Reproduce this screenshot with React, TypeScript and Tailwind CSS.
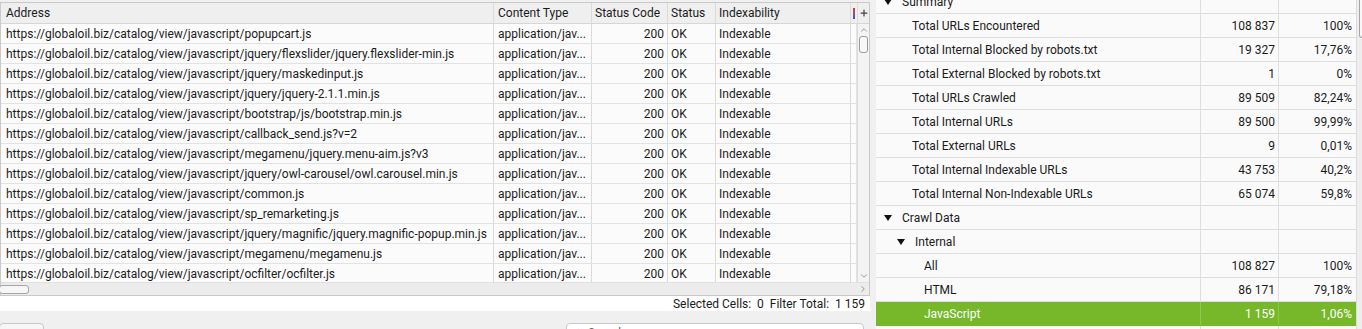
import { ChevronUp, ChevronDown, ChevronRight, Plus, Search } from 'lucide-react'

const FONT = { fontFamily: 'Roboto, "Liberation Sans", sans-serif' }

const URLS = [
  'https://globaloil.biz/catalog/view/javascript/popupcart.js',
  'https://globaloil.biz/catalog/view/javascript/jquery/flexslider/jquery.flexslider-min.js',
  'https://globaloil.biz/catalog/view/javascript/jquery/maskedinput.js',
  'https://globaloil.biz/catalog/view/javascript/jquery/jquery-2.1.1.min.js',
  'https://globaloil.biz/catalog/view/javascript/bootstrap/js/bootstrap.min.js',
  'https://globaloil.biz/catalog/view/javascript/callback_send.js?v=2',
  'https://globaloil.biz/catalog/view/javascript/megamenu/jquery.menu-aim.js?v3',
  'https://globaloil.biz/catalog/view/javascript/jquery/owl-carousel/owl.carousel.min.js',
  'https://globaloil.biz/catalog/view/javascript/common.js',
  'https://globaloil.biz/catalog/view/javascript/sp_remarketing.js',
  'https://globaloil.biz/catalog/view/javascript/jquery/magnific/jquery.magnific-popup.min.js',
  'https://globaloil.biz/catalog/view/javascript/megamenu/megamenu.js',
  'https://globaloil.biz/catalog/view/javascript/ocfilter/ocfilter.js',
]

type Row = { label: string; level: number; count?: string; pct?: string; toggle?: boolean; active?: boolean }

const SUMMARY: Row[] = [
  { label: 'Summary', level: 0, toggle: true },
  { label: 'Total URLs Encountered', level: 1, count: '108 837', pct: '100%' },
  { label: 'Total Internal Blocked by robots.txt', level: 1, count: '19 327', pct: '17,76%' },
  { label: 'Total External Blocked by robots.txt', level: 1, count: '1', pct: '0%' },
  { label: 'Total URLs Crawled', level: 1, count: '89 509', pct: '82,24%' },
  { label: 'Total Internal URLs', level: 1, count: '89 500', pct: '99,99%' },
  { label: 'Total External URLs', level: 1, count: '9', pct: '0,01%' },
  { label: 'Total Internal Indexable URLs', level: 1, count: '43 753', pct: '40,2%' },
  { label: 'Total Internal Non-Indexable URLs', level: 1, count: '65 074', pct: '59,8%' },
  { label: 'Crawl Data', level: 0, toggle: true },
  { label: 'Internal', level: 1, toggle: true },
  { label: 'All', level: 2, count: '108 827', pct: '100%' },
  { label: 'HTML', level: 2, count: '86 171', pct: '79,18%' },
  { label: 'JavaScript', level: 2, count: '1 159', pct: '1,06%', active: true },
  { label: '', level: 2 },
]

const cell = 'h-full flex items-center border-r border-[#dadada] px-[4px] whitespace-nowrap overflow-hidden'

function Triangle() {
  return <span className="inline-block w-0 h-0 border-l-[4px] border-r-[4px] border-t-[6px] border-l-transparent border-r-transparent border-t-[#111] mr-[10px]" />
}

export default function App() {
  return (
    <div style={FONT} className="w-[1362px] h-[329px] flex bg-[#f0f0f0] overflow-hidden text-[#1b1b1b]">
      {/* left: urls table */}
      <div className="w-[870px] shrink-0 flex flex-col pt-[2px]">
        <div className="border border-[#c9c9c9] bg-white flex flex-col">
          <div className="flex">
            <div className="w-[856px] flex flex-col">
              <div className="h-[21px] flex bg-[#efefef] border-b border-[#d6d6d6] text-[12px]">
                <div className={`${cell} w-[493px] pl-[5px]`}>Address</div>
                <div className={`${cell} w-[98px]`}>Content Type</div>
                <div className={`${cell} w-[76px] pl-[3px]`}>Status Code</div>
                <div className={`${cell} w-[48px] pl-[3px]`}>Status</div>
                <div className={`${cell} w-[135px] pl-[3px]`}>Indexability</div>
                <div className="h-full flex items-center pl-[2px]">
                  <span className="w-[2px] h-[11px] bg-gradient-to-b from-[#d03030] to-[#3050d0]" />
                </div>
              </div>
              <div className="h-[258px] overflow-hidden text-[12px]">
                {URLS.map((u) => (
                  <div key={u} className="h-[20px] flex bg-[#fbfbfb] border-b border-[#e2e2e2]">
                    <div className={`${cell} w-[493px] pl-[5px]`}>{u}</div>
                    <div className={`${cell} w-[98px]`}>application/jav...</div>
                    <div className={`${cell} w-[76px] justify-end pr-[3px]`}>200</div>
                    <div className={`${cell} w-[48px] pl-[3px]`}>OK</div>
                    <div className={`${cell} w-[135px] pl-[3px]`}>Indexable</div>
                    <div className="h-full w-[6px] border-r border-[#e2e2e2]" />
                  </div>
                ))}
              </div>
            </div>
            <div className="w-[13px] flex flex-col bg-[#f3f3f3] border-l border-[#dcdcdc]">
              <div className="h-[21px] flex items-center justify-center bg-[#efefef] border-b border-[#d6d6d6]">
                <Plus size={10} strokeWidth={3} className="text-[#444]" />
              </div>
              <div className="h-[258px] flex flex-col items-center">
                <ChevronUp size={10} className="text-[#888] mt-[1px]" />
                <div className="w-[9px] h-[17px] mt-[1px] rounded-[3px] border border-[#9a9a9a] bg-[#f8f8f8]" />
                <div className="flex-1" />
                <ChevronDown size={10} className="text-[#888] mb-[1px]" />
              </div>
            </div>
          </div>
          <div className="h-[13px] flex bg-[#ececec] border-t border-[#e0e0e0]">
            <div className="w-[856px] flex items-center">
              <div className="w-[30px] h-[9px] rounded-[3px] border border-[#a5a5a5] bg-[#f6f6f6] -ml-[2px]" />
            </div>
            <div className="w-[13px] flex items-center justify-center">
              <ChevronRight size={10} className="text-[#888]" />
            </div>
          </div>
        </div>
        <div className="h-[15px] bg-white flex items-center justify-end pr-[5px] text-[12px] whitespace-pre">
          Selected Cells:  0  Filter Total:  1 159
        </div>
        <div className="flex items-start pt-[12px]">
          <div className="w-[45px] h-[20px] -ml-[1px] rounded-[4px] border border-[#c8c8c8] bg-[#f6f6f6] text-[12px] pt-[3px] pl-[6px]">
            Export
          </div>
          <div className="flex-1" />
          <div className="w-[298px] h-[20px] mr-[6px] rounded-[4px] border border-[#c8c8c8] bg-white flex items-center px-[6px] text-[12px] text-[#666]">
            <Search size={11} className="text-[#555] mr-[4px]" />
            Search...
            <div className="flex-1" />
            <ChevronDown size={10} className="text-[#555]" />
          </div>
        </div>
      </div>

      <div className="w-[6px] shrink-0" />

      {/* right: overview tree */}
      <div className="flex-1 flex">
        <div className="w-[480px] flex flex-col -mt-[10px] bg-[#fafafa] text-[12px]">
          {SUMMARY.map((r, i) => (
            <div
              key={i}
              className={`h-[24px] shrink-0 flex border-b ${r.active ? 'bg-[#76b82a] text-white border-[#76b82a]' : 'border-[#dedede]'}`}
            >
              <div
                className={`w-[325px] h-full flex items-center border-r ${r.active ? 'border-[#8cc64a]' : 'border-[#dedede]'} ${
                  r.level === 0 ? 'pl-[8px]' : r.level === 1 ? (r.toggle ? 'pl-[21px]' : 'pl-[36px]') : 'pl-[48px]'
                }`}
              >
                {r.toggle && <Triangle />}
                {r.label}
              </div>
              <div className={`w-[78px] h-full flex items-center justify-end pr-[3px] border-r ${r.active ? 'border-[#8cc64a]' : 'border-[#dedede]'}`}>
                {r.count}
              </div>
              <div className="w-[77px] h-full flex items-center justify-end pr-[4px]">{r.pct}</div>
            </div>
          ))}
        </div>
        <div className="flex-1 bg-[#eeeeee] border-l border-[#dcdcdc] pl-[2px]">
          <div className="w-[6px] h-[46px] rounded-l-[3px] border border-r-0 border-[#a5a5a5] bg-[#f8f8f8] mt-[-8px]" />
        </div>
      </div>
    </div>
  )
}
